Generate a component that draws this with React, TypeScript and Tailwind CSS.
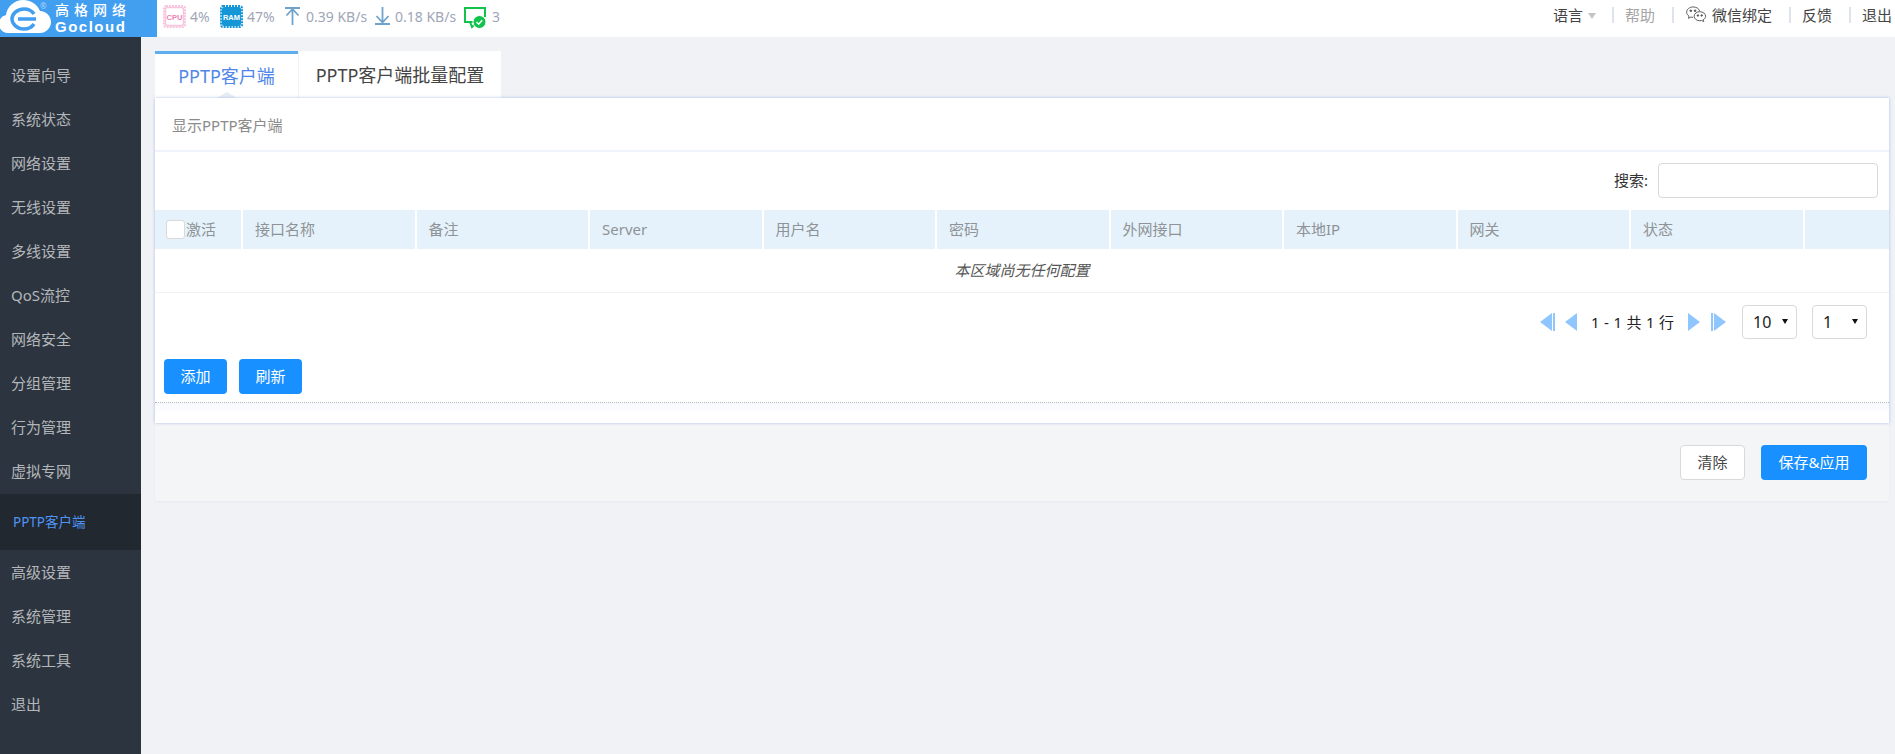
const FONT = "font-['Noto_Sans','Noto_Sans_CJK_SC',sans-serif]";

const menuTop = ['设置向导', '系统状态', '网络设置', '无线设置', '多线设置', 'QoS流控', '网络安全', '分组管理', '行为管理', '虚拟专网'];
const menuBottom = ['高级设置', '系统管理', '系统工具', '退出'];
const columns = ['接口名称', '备注', 'Server', '用户名', '密码', '外网接口', '本地IP', '网关', '状态'];

function Logo() {
  return (
    <div className="relative flex h-[37px] w-[157px] shrink-0 items-start overflow-hidden bg-[#429eef]">
      <svg width="52" height="37" viewBox="0 0 52 37" className="shrink-0">
        <path d="M8 33c-5 0-9-4-9-9 0-5 3-8 7-9 1-8 8-15 17-15 8 0 14 4 17 11 6 0 11 5 11 11 0 6-5 11-11 11z" fill="#fff" />
        <path d="M34 14c-2-3-6-5-10-5-7 0-12 5-12 10s5 10 12 10c4 0 8-2 10-5" fill="none" stroke="#429eef" strokeWidth="3.500" />
        <path d="M18 19h18" stroke="#429eef" strokeWidth="3.500" />
      </svg>
      <span className="absolute left-[40px] top-0 text-[8px] leading-[12px] text-[#a9d3f8]">®</span>
      <div className="ml-[3px] flex flex-col text-white">
        <span className="text-[14px] font-medium leading-[20px] tracking-[5px]">高格网络</span>
        <span className="mt-[-2px] font-['Liberation_Sans',sans-serif] text-[15px] font-bold leading-[17px] tracking-[1.500px]">Gocloud</span>
      </div>
    </div>
  );
}

function CpuIcon() {
  return (
    <svg width="23" height="23" viewBox="0 0 23 23" className="shrink-0">
      <rect x="1" y="1" width="21" height="21" rx="2" fill="#fff" stroke="#f7c6de" strokeWidth="2" strokeDasharray="2 1" />
      <rect x="2.500" y="2.500" width="18" height="18" rx="2" fill="#fff" stroke="#f7c6de" strokeWidth="1.500" />
      <text x="11.500" y="14.500" textAnchor="middle" fontSize="7.500" fontWeight="700" fontFamily="Liberation Sans" fill="#ec7fb3">CPU</text>
    </svg>
  );
}

function RamIcon() {
  return (
    <svg width="23" height="23" viewBox="0 0 23 23" className="shrink-0">
      <rect x="1" y="1" width="21" height="21" rx="2" fill="none" stroke="#1596d6" strokeWidth="2" strokeDasharray="2 1" />
      <rect x="2" y="2" width="19" height="19" rx="2" fill="#1596d6" />
      <text x="11.500" y="14.500" textAnchor="middle" fontSize="7.500" fontWeight="700" fontFamily="Liberation Sans" fill="#fff">RAM</text>
    </svg>
  );
}

function Stats() {
  return (
    <div className="ml-[6px] flex items-center pb-[5px] text-[14px] text-[#a0a6b8]">
      <CpuIcon />
      <span className="ml-[4px] w-[30px]">4%</span>
      <RamIcon />
      <span className="ml-[4px] w-[38px]">47%</span>
      <svg width="15" height="18" viewBox="0 0 15 18" className="shrink-0" fill="none" stroke="#6fa3cd" strokeWidth="1.800">
        <path d="M0 1h15M7.500 18V2M1.500 8.500l6-6.500 6 6.500" />
      </svg>
      <span className="ml-[6px] w-[69px] whitespace-nowrap">0.39 KB/s</span>
      <svg width="15" height="18" viewBox="0 0 15 18" className="shrink-0" fill="none" stroke="#6fa3cd" strokeWidth="1.800">
        <path d="M0 17h15M7.500 0v15M1.500 9l6 6.500 6-6.500" />
      </svg>
      <span className="ml-[5px] w-[69px] whitespace-nowrap">0.18 KB/s</span>
      <svg width="22" height="22" viewBox="0 0 22 22" className="mt-[3px] shrink-0" fill="none">
        <path d="M10 15H1V1h20v9" stroke="#12c24f" strokeWidth="2" />
        <path d="M6 15l2 5 4-4" stroke="#12c24f" strokeWidth="2" />
        <circle cx="15.500" cy="15" r="6.500" fill="#12c24f" stroke="#fff" strokeWidth="1" />
        <path d="M12.500 15l2.200 2.200 3.500-4" stroke="#fff" strokeWidth="1.500" />
      </svg>
      <span className="ml-[6px]">3</span>
    </div>
  );
}

function WeChat() {
  return (
    <svg width="21" height="18" viewBox="0 0 22 19" fill="none" stroke="#555" strokeWidth="1" className="shrink-0">
      <path d="M7.500 1C3.500 1 .6 3.500.6 6.500c0 1.800 1 3.300 2.500 4.300L2.500 13l2.500-1.300c.8.200 1.500.300 2.300.300" />
      <path d="M7.500 1c3.400 0 6.200 1.800 6.800 4.300" />
      <path d="M14.500 6c-3.300 0-6 2.100-6 4.800s2.700 4.800 6 4.800c.7 0 1.300-.1 1.900-.3l2.100 1.200-.5-1.900c1.600-.9 2.600-2.200 2.600-3.800C20.600 8.100 17.800 6 14.500 6z" />
      <circle cx="5" cy="5" r=".9" fill="#555" />
      <circle cx="9.500" cy="5" r=".9" fill="#555" />
      <circle cx="12.500" cy="10" r=".8" fill="#555" />
      <circle cx="16.500" cy="10" r=".8" fill="#555" />
    </svg>
  );
}

function TopRight() {
  const sep = 'h-4 w-[2px] bg-[#dfe3ec]';
  return (
    <div className="ml-auto flex items-center whitespace-nowrap pb-[7px] pr-[3px] text-[15px] text-[#444]">
      <span>语言</span>
      <span className="ml-[5px] mt-[2px] h-0 w-0 border-x-[4px] border-t-[6px] border-x-transparent border-t-[#c4c4c4]" />
      <span className={`ml-[16px] ${sep}`} />
      <span className="ml-[11px] text-[#a5a5a5]">帮助</span>
      <span className={`ml-[17px] ${sep}`} />
      <span className="ml-[12px]"><WeChat /></span>
      <span className="ml-[5px]">微信绑定</span>
      <span className={`ml-[17px] ${sep}`} />
      <span className="ml-[11px]">反馈</span>
      <span className={`ml-[17px] ${sep}`} />
      <span className="ml-[11px]">退出</span>
    </div>
  );
}

function Sidebar() {
  return (
    <aside className="flex w-[141px] shrink-0 flex-col bg-[#2c343f] pt-4 text-[15px] text-[#b4b7ba]">
      {menuTop.map((m) => (
        <div key={m} className="flex h-[44px] items-center pl-[11px]">{m}</div>
      ))}
      <div className="mt-px flex h-[56px] items-center bg-[#212830] pl-[13px] text-[13.500px] text-[#4f94f5]">PPTP客户端</div>
      {menuBottom.map((m) => (
        <div key={m} className="flex h-[44px] items-center pl-[11px]">{m}</div>
      ))}
    </aside>
  );
}

function Tri({ dir, bar }: { dir: 'l' | 'r'; bar?: boolean }) {
  return (
    <span className={`flex items-center gap-px ${dir === 'r' ? 'flex-row-reverse' : ''}`}>
      {dir === 'l' ? (
        <span className="h-0 w-0 border-y-[9px] border-r-[12px] border-y-transparent border-r-[#90c6fe]" />
      ) : (
        <span className="h-0 w-0 border-y-[9px] border-l-[12px] border-y-transparent border-l-[#90c6fe]" />
      )}
      {bar && <span className="h-[18px] w-[2px] bg-[#90c6fe]" />}
    </span>
  );
}

function PageSelect({ value }: { value: string }) {
  return (
    <div className="relative flex h-[34px] w-[55px] items-center rounded-[4px] border border-[#d9d9d9] bg-white pl-[10px] text-[16px] text-[#222]">
      {value}
      <span className="absolute right-[8px] top-[13px] h-0 w-0 border-x-[3px] border-t-[5px] border-x-transparent border-t-[#111]" />
    </div>
  );
}

function Table() {
  return (
    <>
      <div className="flex h-[58px] items-start justify-end bg-white pr-[11px] pt-[11px]">
        <span className="mr-[10px] mt-[6px] text-[15px] text-[#333]">搜索:</span>
        <div className="h-[35px] w-[220px] rounded-[4px] border border-[#d9d9d9] bg-white" />
      </div>
      <div className="flex h-[39px] gap-[2px] text-[15px] text-[#8f9296]">
        <div className="relative flex w-[86px] items-center bg-[#e5f2fb] pl-[31px]">
          <span className="absolute left-[11px] top-[10px] h-[19px] w-[19px] rounded-[3px] border border-[#d9d9d9] bg-white" />
          激活
        </div>
        {columns.map((c) => (
          <div key={c} className="flex w-[171.500px] items-center bg-[#e5f2fb] pl-[12px]">{c}</div>
        ))}
        <div className="flex-1 bg-[#e5f2fb]" />
      </div>
      <div className="flex h-[44px] items-center justify-center border-b border-[#f0f1f3] bg-white text-[15px] italic text-[#555]">本区域尚无任何配置</div>
    </>
  );
}

function Panel() {
  return (
    <div className="relative z-10 mr-[6px] bg-white shadow-[0_0_3px_rgba(140,170,230,0.7)]">
      <div className="flex h-[54px] items-center border-b-2 border-[#eef3fd] pl-[17px] pt-[3px] text-[15px] text-[#8b8b8b]">显示PPTP客户端</div>
      <Table />
      <div className="flex items-center justify-end pr-[22px] pt-[12px]">
        <Tri dir="l" bar />
        <span className="ml-[10px]"><Tri dir="l" /></span>
        <span className="ml-[14px] mr-[13px] w-[84px] whitespace-nowrap text-[15px] tracking-[0.3px] text-[#222]">1 - 1 共 1 行</span>
        <Tri dir="r" />
        <span className="ml-[11px]"><Tri dir="r" bar /></span>
        <span className="ml-[16px]"><PageSelect value="10" /></span>
        <span className="ml-[15px]"><PageSelect value="1" /></span>
      </div>
      <div className="flex gap-3 border-b border-dotted border-[#b4b4b4] pb-2 pl-[9px] pt-[20px]">
        <button className="h-[35px] w-[63px] rounded-[4px] bg-[#1890ff] text-[15px] text-white">添加</button>
        <button className="h-[35px] w-[63px] rounded-[4px] bg-[#1890ff] text-[15px] text-white">刷新</button>
      </div>
      <div className="h-[20px] bg-gradient-to-b from-[#f6f8fe] via-white to-white" />
    </div>
  );
}

export default function App() {
  return (
    <div className={`flex h-[754px] w-[1895px] flex-col overflow-hidden bg-[#f0f2f5] ${FONT}`}>
      <header className="flex h-[37px] shrink-0 items-center bg-white">
        <Logo />
        <Stats />
        <TopRight />
      </header>
      <div className="flex flex-1">
        <Sidebar />
        <main className="flex-1 pl-[14px] pt-[14px]">
          <div className="flex h-[47px] items-stretch">
            <div className="relative flex w-[143px] items-center justify-center border-t-[3px] border-[#5eaeef] bg-white text-[18px] text-[#4f86e8]">
              PPTP客户端
              <span className="absolute bottom-0 left-1/2 h-0 w-0 -translate-x-1/2 border-x-[10px] border-b-[6px] border-x-transparent border-b-[#e8edf5]" />
            </div>
            <div className="ml-px flex w-[202px] items-center justify-center bg-white pt-[2px] text-[18px] text-[#444]">PPTP客户端批量配置</div>
          </div>
          <Panel />
          <div className="mr-[6px] flex h-[78px] items-center justify-end gap-4 bg-[#f4f5f7] pr-[22px] shadow-[0_1px_2px_rgba(210,210,220,0.2)]">
            <button className="h-[35px] w-[65px] rounded-[4px] border border-[#d9d9d9] bg-white text-[15px] text-[#444]">清除</button>
            <button className="h-[35px] w-[106px] rounded-[4px] bg-[#1890ff] text-[15px] text-white">保存&amp;应用</button>
          </div>
        </main>
      </div>
    </div>
  );
}
